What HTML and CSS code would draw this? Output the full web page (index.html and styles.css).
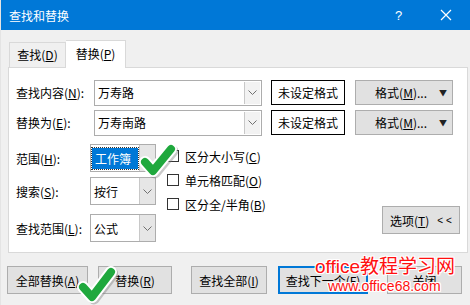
FILE: index.html
```html
<!DOCTYPE html>
<html lang="zh-CN">
<head>
  <meta charset="UTF-8">
  <title>查找和替换</title>
  <link rel="stylesheet" href="styles.css">
</head>
<body>
  <div class="dialog">
    <div class="titlebar">
      <span class="title">查找和替换</span>
      <span class="help">?</span>
      <span class="close">
        <svg width="12" height="12" viewBox="0 0 12 12"><path d="M1 1 L11 11 M11 1 L1 11" stroke="#fff" stroke-width="1.2" fill="none"/></svg>
      </span>
    </div>

    <div class="tabs">
      <div class="tab">查找(<u>D</u>)</div>
      <div class="tab active">替换(<u>P</u>)</div>
    </div>

    <div class="panel">
      <div class="row">
        <label class="label wide">查找内容(<u>N</u>):</label>
        <div class="combo">
          <span class="combo-text">万寿路</span>
          <span class="combo-btn"><svg width="9" height="5" viewBox="0 0 9 5"><path d="M0.5 0.5 L4.5 4.5 L8.5 0.5" stroke="#707070" fill="none"/></svg></span>
        </div>
        <div class="fmt-box">未设定格式</div>
        <div class="btn fmt-btn">格式(<u>M</u>)... <span class="caret">&#9660;</span></div>
      </div>
      <div class="row">
        <label class="label wide">替换为(<u>E</u>):</label>
        <div class="combo">
          <span class="combo-text">万寿南路</span>
          <span class="combo-btn"><svg width="9" height="5" viewBox="0 0 9 5"><path d="M0.5 0.5 L4.5 4.5 L8.5 0.5" stroke="#707070" fill="none"/></svg></span>
        </div>
        <div class="fmt-box">未设定格式</div>
        <div class="btn fmt-btn">格式(<u>M</u>)... <span class="caret">&#9660;</span></div>
      </div>

      <div class="options">
        <div class="selects">
          <div class="opt-row first">
            <label class="label">范围(<u>H</u>):</label>
            <div class="select">
              <span class="select-text selected">工作簿</span>
              <span class="select-btn"></span>
            </div>
          </div>
          <div class="opt-row second">
            <label class="label">搜索(<u>S</u>):</label>
            <div class="select">
              <span class="select-text">按行</span>
              <span class="select-btn"><svg width="9" height="5" viewBox="0 0 9 5"><path d="M0.5 0.5 L4.5 4.5 L8.5 0.5" stroke="#707070" fill="none"/></svg></span>
            </div>
          </div>
          <div class="opt-row third">
            <label class="label">查找范围(<u>L</u>):</label>
            <div class="select">
              <span class="select-text">公式</span>
              <span class="select-btn"><svg width="9" height="5" viewBox="0 0 9 5"><path d="M0.5 0.5 L4.5 4.5 L8.5 0.5" stroke="#707070" fill="none"/></svg></span>
            </div>
          </div>
        </div>

        <div class="checks">
          <div class="check"><span class="box"></span>区分大小写(<u>C</u>)</div>
          <div class="check"><span class="box"></span>单元格匹配(<u>O</u>)</div>
          <div class="check"><span class="box"></span>区分全/半角(<u>B</u>)</div>
        </div>

        <div class="btn options-btn">选项(<u>T</u>)<span class="chev">&lt; &lt;</span></div>
      </div>
    </div>

    <div class="buttons">
      <div class="btn b-all">全部替换(<u>A</u>)</div>
      <div class="btn b-one">替换(<u>R</u>)</div>
      <div class="btn b-findall">查找全部(<u>I</u>)</div>
      <div class="btn b-next">查找下一个(<u>F</u>)</div>
      <div class="btn b-close">关闭</div>
    </div>

    <!-- overlays -->
    <svg class="tick tick-1" width="40" height="38" viewBox="0 0 40 38">
      <path d="M7 20 L15 29 L33 7" stroke="#7a7a7a" stroke-opacity="0.4" stroke-width="11" fill="none" stroke-linecap="round" stroke-linejoin="round" transform="translate(2 2)"/>
      <path d="M7 20 L15 29 L33 7" stroke="#fff" stroke-width="12" fill="none" stroke-linecap="round" stroke-linejoin="round"/>
      <path d="M7 20 L15 29 L33 7" stroke="#1fa83d" stroke-width="8" fill="none" stroke-linecap="round" stroke-linejoin="round"/>
    </svg>
    <svg class="tick tick-2" width="42" height="42" viewBox="0 0 42 42">
      <path d="M7 23 L16 33 L35 8" stroke="#7a7a7a" stroke-opacity="0.4" stroke-width="11" fill="none" stroke-linecap="round" stroke-linejoin="round" transform="translate(2 2)"/>
      <path d="M7 23 L16 33 L35 8" stroke="#fff" stroke-width="12" fill="none" stroke-linecap="round" stroke-linejoin="round"/>
      <path d="M7 23 L16 33 L35 8" stroke="#1fa83d" stroke-width="8" fill="none" stroke-linecap="round" stroke-linejoin="round"/>
    </svg>
    <div class="watermark">
      <div class="wm-1">office教程学习网</div>
      <div class="wm-2">www.office68.com</div>
    </div>
  </div>
</body>
</html>
```

FILE: styles.css
```css
body {
  margin: 0;
  font-family: "Noto Sans CJK SC", "Noto Sans", sans-serif;
  font-size: 12px;
  color: #000;
}
u {
  text-decoration: underline;
  text-underline-offset: 1px;
}
.dialog {
  position: relative;
  width: 469px;
  height: 305px;
  background: #f0f0f0;
  border-left: 1px solid #e4e4e4;
  overflow: hidden;
}
.titlebar {
  height: 30px;
  background: #0078d7;
  color: #fff;
  display: flex;
  align-items: center;
  padding-left: 8px;
}
.title {
  flex: 1;
  font-size: 12px;
}
.help {
  font-family: "Liberation Sans", sans-serif;
  font-size: 13px;
  width: 12px;
  margin-right: 33px;
}
.close {
  display: flex;
  margin-right: 18px;
}
.tabs {
  display: flex;
  align-items: flex-end;
  height: 37px;
  padding-left: 8px;
  position: relative;
  z-index: 1;
}
.tab {
  height: 24px;
  line-height: 24px;
  padding: 0 7px;
  border: 1px solid #d9d9d9;
  border-bottom: none;
  background: #f0f0f0;
  width: 41px;
  text-align: center;
}
.tab.active {
  height: 27px;
  line-height: 26px;
  width: 45px;
  background: #fff;
  border-left: none;
  margin-bottom: -1px;
}
.panel {
  margin-left: 7px;
  width: 444px;
  height: 172px;
  background: #fff;
  border: 1px solid #d9d9d9;
  padding: 12px 7px 0 7px;
}
.row {
  display: flex;
  align-items: center;
  height: 25px;
  margin-bottom: 5px;
}
.label {
  width: 74px;
  flex: none;
}
.label.wide {
  width: 78px;
}
.combo {
  width: 166px;
  height: 24px;
  border: 1px solid #adadad;
  display: flex;
  align-items: center;
}
.combo-text {
  flex: 1;
  padding-left: 3px;
}
.combo-btn {
  width: 15px;
  height: 22px;
  border-left: 1px solid #c8c8c8;
  background: #f2f2f2;
  display: flex;
  align-items: center;
  justify-content: center;
  margin-right: 1px;
}
.fmt-box {
  margin-left: 9px;
  width: 72px;
  height: 23px;
  border: 1px solid #000;
  line-height: 23px;
  text-align: center;
}
.btn {
  background: #e1e1e1;
  border: 1px solid #adadad;
  box-sizing: border-box;
  display: flex;
  align-items: center;
  justify-content: center;
}
.fmt-btn {
  margin-left: 10px;
  width: 98px;
  height: 25px;
  justify-content: flex-end;
  padding-right: 5px;
}
.caret {
  font-size: 8px;
  margin-left: 12px;
  color: #222;
}
.options {
  display: flex;
  margin-top: 9px;
}
.opt-row {
  display: flex;
  align-items: center;
}
.opt-row.second {
  margin-top: 5px;
}
.opt-row.third {
  margin-top: 9px;
}
.select {
  width: 64px;
  height: 26px;
  border: 1px solid #adadad;
  display: flex;
  align-items: center;
}
.select-text {
  flex: 1;
  padding-left: 3px;
}
.select-text.selected {
  flex: none;
  width: 43px;
  margin-left: 1px;
  padding-left: 3px;
  height: 21px;
  line-height: 21px;
  background: #0078d7;
  color: #fff;
  outline: 1px dotted #333;
  margin-right: auto;
}
.select-btn {
  width: 15px;
  height: 26px;
  border-left: 1px solid #c8c8c8;
  background: #e6e6e6;
  display: flex;
  align-items: center;
  justify-content: center;
}
.checks {
  margin-left: 11px;
}
.check {
  display: flex;
  align-items: center;
  height: 24px;
}
.box {
  width: 10px;
  height: 10px;
  border: 1px solid #333;
  margin-right: 6px;
  background: #fff;
}
.options-btn {
  margin-left: auto;
  margin-top: 62px;
  width: 78px;
  height: 28px;
  justify-content: flex-start;
  padding-left: 7px;
}
.chev {
  margin-left: 8px;
  font-family: "Liberation Sans", sans-serif;
  font-size: 10px;
}
.buttons {
  display: flex;
  margin-top: 13px;
  padding-left: 6px;
}
.buttons .btn {
  height: 28px;
}
.b-all { width: 81px; }
.b-one { width: 74px; margin-left: 10px; }
.b-findall { width: 76px; margin-left: 19px; }
.b-next {
  width: 90px;
  margin-left: 11px;
  border: 2px solid #0078d7;
}
.b-close { width: 75px; margin-left: 19px; }
.tick {
  position: absolute;
}
.tick-1 {
  left: 137px;
  top: 142px;
}
.tick-2 {
  left: 75px;
  top: 264px;
}
.watermark {
  position: absolute;
  left: 314px;
  top: 255px;
  color: #ff1010;
  font-family: "Liberation Sans", "Noto Sans CJK SC", sans-serif;
  text-shadow: 1px 0 #fff, -1px 0 #fff, 0 1px #fff, 0 -1px #fff, 1px 1px #fff, -1px -1px #fff, 1px -1px #fff, -1px 1px #fff;
}
.wm-1 {
  font-size: 19px;
  line-height: 24px;
}
.wm-2 {
  font-size: 14px;
  line-height: 14px;
  margin-left: 13px;
}
```
